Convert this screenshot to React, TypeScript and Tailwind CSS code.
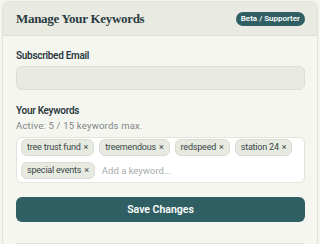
import { useState } from "react";

const INITIAL_KEYWORDS = [
  "tree trust fund",
  "treemendous",
  "redspeed",
  "station 24",
  "special events",
];

export default function App() {
  const [keywords, setKeywords] = useState<string[]>(INITIAL_KEYWORDS);
  const [draft, setDraft] = useState("");

  const removeKeyword = (k: string) =>
    setKeywords((prev) => prev.filter((x) => x !== k));

  return (
    <div
      className="min-h-screen bg-[#f6f6f1] pl-[2px] pr-[2px] pt-[1px]"
      style={{ fontFamily: 'Roboto, "Liberation Sans", sans-serif' }}
    >
      <div className="rounded-t-[7px] border border-b-0 border-[#e1e3da] bg-[#f6f6f1]">
        <div className="flex h-[34px] items-center justify-between rounded-t-[7px] border-b border-[#dfe1d8] bg-[#e9ebe3] pl-[13px] pr-[12px]">
          <h1
            className="text-[13px] font-bold tracking-[-0.3px] text-[#2c3b42]"
            style={{ fontFamily: '"Liberation Serif", serif' }}
          >
            Manage Your Keywords
          </h1>
          <span className="rounded-full bg-[#2f5f63] px-[5px] py-[2px] text-[8px] font-semibold leading-[10px] text-white">
            Beta / Supporter
          </span>
        </div>

        <div className="pl-[13px] pr-[12px] pt-[13px]">
          <label className="block text-[10px] leading-[14px] font-semibold tracking-[-0.3px] text-[#2c3b42]">
            Subscribed Email
          </label>
          <input
            className="mt-[3px] block h-[24px] w-full rounded-[6px] border border-[#dcdfd5] bg-[#e9ebe3] px-2 text-[10px] outline-none"
            readOnly
          />

          <div className="mt-[14px] text-[10px] leading-[14px] font-semibold tracking-[-0.3px] text-[#2c3b42]">
            Your Keywords
          </div>
          <div className="mt-[2px] text-[9.5px] leading-[12px] tracking-[0.2px] text-[#7b8584]">
            Active: {keywords.length} / 15 keywords max.
          </div>

          <div className="mt-[5px] flex flex-wrap items-center gap-x-[5px] gap-y-[6px] rounded-[6px] border border-[#e3e5dd] bg-white px-[4px] pt-[1px] pb-[3px]">
            {keywords.map((k) => (
              <span
                key={k}
                className="flex h-[17px] items-center gap-[3px] rounded-[6px] border border-[#d8dcd1] bg-[#e7eae1] px-[5px] text-[9px] tracking-[-0.2px] text-[#3a4747]"
              >
                {k}
                <button
                  onClick={() => removeKeyword(k)}
                  className="text-[9px] leading-none text-[#3a4747]"
                >
                  ×
                </button>
              </span>
            ))}
            <input
              value={draft}
              onChange={(e) => setDraft(e.target.value)}
              placeholder="Add a keyword..."
              className="h-[17px] min-w-[80px] flex-1 bg-transparent px-[2px] text-[9.5px] outline-none placeholder:text-[#a5abaa]"
            />
          </div>

          <button className="mt-[14px] flex h-[25px] w-full items-center justify-center rounded-[6px] bg-[#2f5f63] text-[10.5px] font-semibold text-white">
            Save Changes
          </button>

          <div className="mt-[21px] border-t border-[#e1e3da]" />
        </div>
      </div>
    </div>
  );
}
